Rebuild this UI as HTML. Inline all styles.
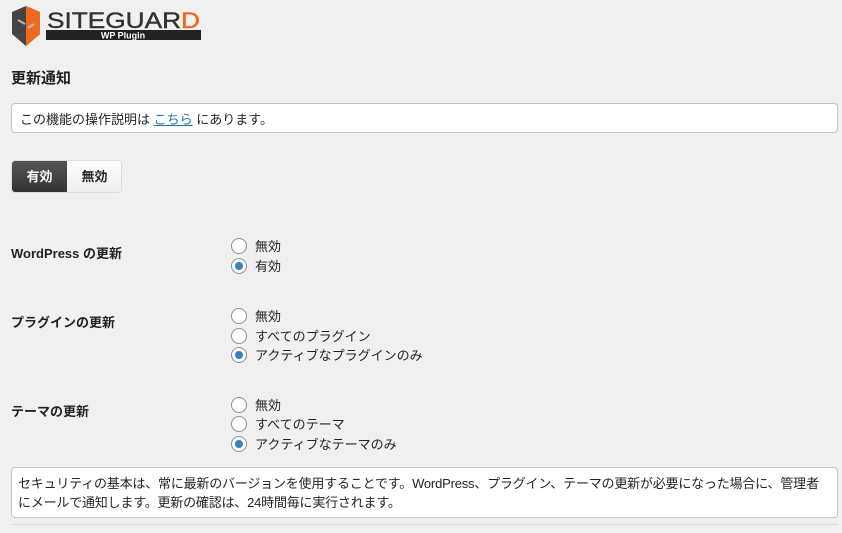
<!DOCTYPE html>
<html><head><meta charset="utf-8"><style>
body{margin:0;background:#f0f0f1;font-family:"Liberation Sans","Noto Sans CJK JP",sans-serif;font-size:13px;color:#1d2327;width:842px;height:533px;overflow:hidden;position:relative}
.a{position:absolute}
.box{position:absolute;left:11px;right:4px;background:#fff;border:1px solid #c3c4c7;border-radius:4px;box-sizing:border-box}
.lbl{position:absolute;left:11px;font-weight:bold;font-size:13px}
.r{position:absolute;left:231px;width:16px;height:16px;box-sizing:border-box;border:1px solid #8c8f94;border-radius:50%;background:#fff}
.r.on::after{content:"";position:absolute;left:3px;top:3px;width:8px;height:8px;border-radius:50%;background:#3582c4}
.t{position:absolute;left:255px;font-size:13px}
</style></head><body>
<svg class="a" style="left:8px;top:6px" width="196" height="42">
<path d="M4 6 L18 0 L32 6 L32 28 L18 40 L4 28Z" fill="#444"/>
<path d="M18 0 L32 6 L32 28 L18 40Z" fill="#f06a1e"/>
<path d="M10 14 L17 18 M20 22 L26 18" stroke="#bbb" stroke-width="2"/>
<text x="39" y="22" font-family="Liberation Sans" font-size="22" fill="#333" textLength="153" lengthAdjust="spacingAndGlyphs" stroke="#333" stroke-width="0.4">SITEGUAR<tspan fill="#f06a1e" stroke="#f06a1e">D</tspan></text>
<rect x="38" y="24" width="155" height="10" fill="#222"/>
<text x="115" y="32.5" text-anchor="middle" font-family="Liberation Sans" font-size="9" font-weight="bold" fill="#fff">WP Plugin</text>
</svg>
<div class="a" style="left:11px;top:67px;font-size:15px;font-weight:bold">更新通知</div>
<div class="box" style="top:103px;height:30px;padding:5px 8px;font-size:13px">この機能の操作説明は <span style="color:#2271b1;text-decoration:underline">こちら</span> にあります。</div>
<div class="a" style="left:11px;top:160px;width:111px;height:33px;border:1px solid #ddd;border-radius:4px;background:#fff;box-sizing:border-box;overflow:hidden">
<div class="a" style="left:0;top:0;width:55px;height:31px;background:linear-gradient(#555,#333);color:#fff;font-weight:bold;text-align:center;line-height:31px">有効</div>
<div class="a" style="left:55px;top:0;width:55px;height:31px;background:linear-gradient(#fff,#eee);font-weight:bold;text-align:center;line-height:31px">無効</div>
</div>
<div class="lbl" style="top:243px">WordPress の更新</div>
<div class="r" style="top:238px"></div><div class="t" style="top:236px">無効</div>
<div class="r on" style="top:258px"></div><div class="t" style="top:256px">有効</div>
<div class="lbl" style="top:312px">プラグインの更新</div>
<div class="r" style="top:308px"></div><div class="t" style="top:306px">無効</div>
<div class="r" style="top:328px"></div><div class="t" style="top:326px">すべてのプラグイン</div>
<div class="r on" style="top:347px"></div><div class="t" style="top:345px">アクティブなプラグインのみ</div>
<div class="lbl" style="top:401px">テーマの更新</div>
<div class="r" style="top:397px"></div><div class="t" style="top:395px">無効</div>
<div class="r" style="top:416px"></div><div class="t" style="top:414px">すべてのテーマ</div>
<div class="r on" style="top:436px"></div><div class="t" style="top:434px">アクティブなテーマのみ</div>
<div class="box" style="top:467px;height:51px;padding:6px 6px;font-size:13px;line-height:19px;letter-spacing:-0.2px">セキュリティの基本は、常に最新のバージョンを使用することです。WordPress、プラグイン、テーマの更新が必要になった場合に、管理者にメールで通知します。更新の確認は、24時間毎に実行されます。</div>
<div class="a" style="left:11px;right:4px;top:524px;height:1px;background:#dcdcde"></div>
</body></html>
